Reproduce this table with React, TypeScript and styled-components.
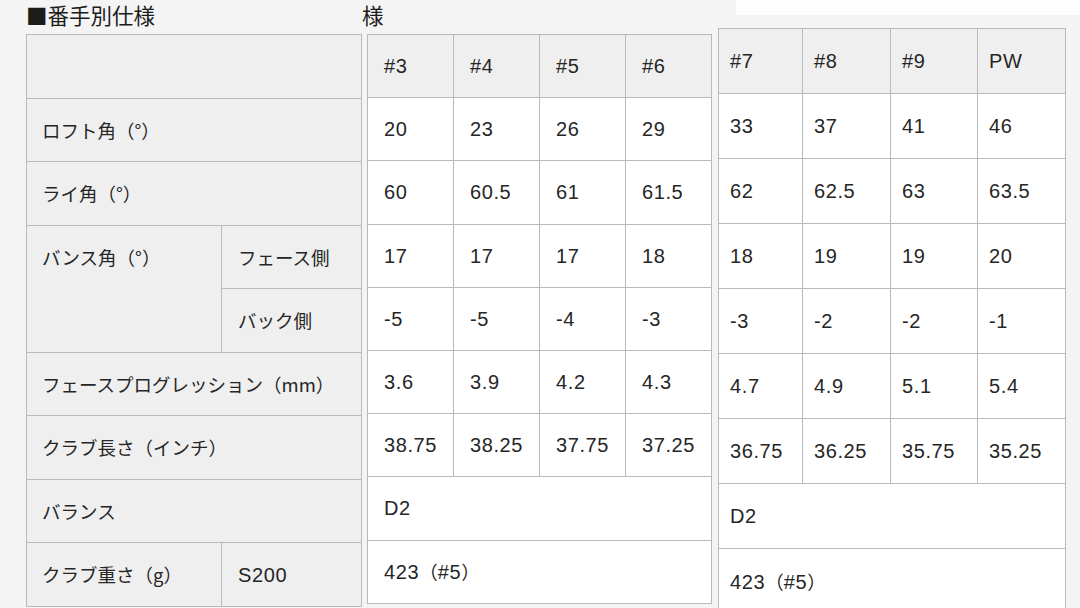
import styled, { createGlobalStyle } from 'styled-components';

const GlobalStyle = createGlobalStyle`
  html, body {
    margin: 0;
    padding: 0;
    background: #f4f4f4;
  }
  body {
    font-family: "Liberation Sans", "Noto Sans CJK JP", sans-serif;
    color: #262626;
  }
`;

const Page = styled.div`
  display: flex;
  width: 1080px;
  height: 608px;
  overflow: hidden;
`;

const Sheet = styled.div<{ $w: number; $pl: number }>`
  display: flex;
  flex-direction: column;
  width: ${(p) => p.$w}px;
  flex: none;
  padding-left: ${(p) => p.$pl}px;
  box-sizing: border-box;
  background: #f4f4f4;
  overflow: hidden;
  & > * {
    flex: none;
  }
`;

const Title = styled.h2<{ $indent?: number }>`
  margin: 0;
  height: 34px;
  line-height: 30px;
  font-size: 21.5px;
  font-weight: 400;
  font-family: "Noto Sans CJK JP", sans-serif;
  color: #1c1c1c;
  white-space: nowrap;
  text-indent: ${(p) => p.$indent || 0}px;
`;

const TopStrip = styled.div`
  height: 15px;
  margin-left: 18px;
  margin-bottom: 13px;
  background: #fdfdfd;
`;

const Table = styled.table<{ $w: number }>`
  width: ${(p) => p.$w}px;
  border-collapse: collapse;
  table-layout: fixed;
`;

const Row = styled.tr<{ $h: number }>`
  height: ${(p) => p.$h}px;
`;

const Cell = styled.td<{ $head?: boolean; $pl?: number; $top?: boolean }>`
  border: 1.5px solid #bababa;
  background: ${(p) => (p.$head ? '#efefef' : '#ffffff')};
  padding: ${(p) => (p.$top ? '19px' : '0')} 0 0 ${(p) => p.$pl ?? 16}px;
  vertical-align: ${(p) => (p.$top ? 'top' : 'middle')};
  font-size: 20px;
  line-height: 24px;
  white-space: nowrap;
  overflow: hidden;
`;

const Label = styled(Cell)`
  background: #efefef;
  font-family: "Noto Sans CJK JP", sans-serif;
  font-size: 18.5px;
`;

const Num = styled.span`
  font-family: "Liberation Sans", sans-serif;
  font-size: 20px;
  letter-spacing: 0.6px;
`;

const Paren = styled.span`
  font-family: "Noto Sans CJK JP", sans-serif;
  font-size: 18.5px;
`;

const left = [
  ['#3', '#4', '#5', '#6'],
  ['20', '23', '26', '29'],
  ['60', '60.5', '61', '61.5'],
  ['17', '17', '17', '18'],
  ['-5', '-5', '-4', '-3'],
  ['3.6', '3.9', '4.2', '4.3'],
  ['38.75', '38.25', '37.75', '37.25'],
];

const right = [
  ['#7', '#8', '#9', 'PW'],
  ['33', '37', '41', '46'],
  ['62', '62.5', '63', '63.5'],
  ['18', '19', '19', '20'],
  ['-3', '-2', '-2', '-1'],
  ['4.7', '4.9', '5.1', '5.4'],
  ['36.75', '36.25', '35.75', '35.25'],
];

function Values({
  rows,
  h,
  pl,
  cols,
}: {
  rows: string[][];
  h: number;
  pl: number;
  cols: number[];
}) {
  return (
    <Table $w={cols.reduce((a, b) => a + b, 0)}>
      <colgroup>
        {cols.map((c, i) => (
          <col key={i} style={{ width: c }} />
        ))}
      </colgroup>
      <tbody>
        {rows.map((r, i) => (
          <Row $h={h} key={i}>
            {r.map((v, j) => (
              <Cell $head={i === 0} $pl={pl} key={j}>
                <Num>{v}</Num>
              </Cell>
            ))}
          </Row>
        ))}
        <Row $h={h}>
          <Cell colSpan={4} $pl={pl}>
            <Num>D2</Num>
          </Cell>
        </Row>
        <Row $h={h}>
          <Cell colSpan={4} $pl={pl}>
            <Num>423</Num>
            <Paren>（</Paren>
            <Num>#5</Num>
            <Paren>）</Paren>
          </Cell>
        </Row>
      </tbody>
    </Table>
  );
}

const H = 63.5;

export default function App() {
  return (
    <>
      <GlobalStyle />
      <Page>
        <Sheet $w={362} $pl={26}>
          <Title>■番手別仕様</Title>
          <Table $w={336}>
            <colgroup>
              <col style={{ width: 195 }} />
              <col />
            </colgroup>
            <tbody>
              <Row $h={H}>
                <Label colSpan={2} />
              </Row>
              <Row $h={H}>
                <Label colSpan={2} $pl={15}>
                  ロフト角（°）
                </Label>
              </Row>
              <Row $h={H}>
                <Label colSpan={2} $pl={15}>
                  ライ角（°）
                </Label>
              </Row>
              <Row $h={H}>
                <Label rowSpan={2} $pl={15} $top>
                  バンス角（°）
                </Label>
                <Label>フェース側</Label>
              </Row>
              <Row $h={H}>
                <Label>バック側</Label>
              </Row>
              <Row $h={H}>
                <Label colSpan={2} $pl={15}>
                  フェースプログレッション（mm）
                </Label>
              </Row>
              <Row $h={H}>
                <Label colSpan={2} $pl={15}>
                  クラブ長さ（インチ）
                </Label>
              </Row>
              <Row $h={H}>
                <Label colSpan={2} $pl={15}>
                  バランス
                </Label>
              </Row>
              <Row $h={H}>
                <Label $pl={15}>クラブ重さ（g）</Label>
                <Label>
                  <Num>S200</Num>
                </Label>
              </Row>
            </tbody>
          </Table>
        </Sheet>
        <Sheet $w={350} $pl={5}>
          <Title $indent={-5}>様</Title>
          <Values rows={left} h={63.2} pl={16} cols={[86, 86, 86, 86]} />
        </Sheet>
        <Sheet $w={368} $pl={6}>
          <TopStrip />
          <Values rows={right} h={65} pl={11} cols={[84, 88, 87, 88]} />
        </Sheet>
      </Page>
    </>
  );
}
